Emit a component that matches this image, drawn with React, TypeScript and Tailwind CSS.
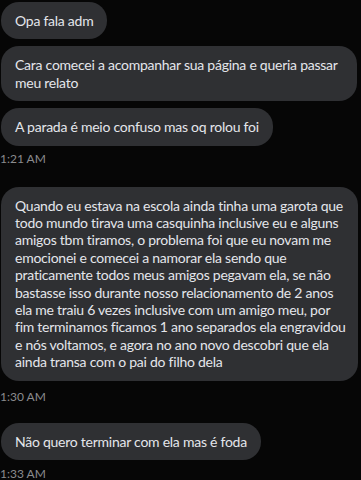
export default function App() {
  const bubble =
    "bg-[#2f3033] text-[#e4e6eb] rounded-[18px] px-[14px] py-[10px] text-[14px] leading-[17.4px] tracking-[-0.25px] whitespace-nowrap";
  const time = "text-[12px] leading-[16px] text-[#8a8b8d]";

  return (
    <div className="w-[361px] h-[480px] overflow-hidden bg-[#060606] font-['Lato',sans-serif] pl-[1px] pt-[2px] flex flex-col items-start">
      <div className={`${bubble} w-fit`}>Opa fala adm</div>
      <div className={`${bubble} w-[356px] mt-[7px]`}>
        Cara comecei a acompanhar sua página e queria passar
        <br />
        meu relato
      </div>
      <div className={`${bubble} w-fit mt-[7px]`}>A parada é meio confuso mas oq rolou foi</div>
      <div className={`${time} mt-[5px] -ml-[1px]`}>1:21 AM</div>

      <div className={`${bubble} w-[357px] mt-[20px]`}>
        Quando eu estava na escola ainda tinha uma garota que
        <br />
        todo mundo tirava uma casquinha inclusive eu e alguns
        <br />
        amigos tbm tiramos, o problema foi que eu novam me
        <br />
        emocionei e comecei a namorar ela sendo que
        <br />
        praticamente todos meus amigos pegavam ela, se não
        <br />
        bastasse isso durante nosso relacionamento de 2 anos
        <br />
        ela me traiu 6 vezes inclusive com um amigo meu, por
        <br />
        fim terminamos ficamos 1 ano separados ela engravidou
        <br />
        e nós voltamos, e agora no ano novo descobri que ela
        <br />
        ainda transa com o pai do filho dela
      </div>
      <div className={`${time} mt-[8px] -ml-[1px]`}>1:30 AM</div>

      <div className={`${bubble} w-fit mt-[18px]`}>Não quero terminar com ela mas é foda</div>
      <div className={`${time} mt-[6px] -ml-[1px]`}>1:33 AM</div>
    </div>
  );
}
